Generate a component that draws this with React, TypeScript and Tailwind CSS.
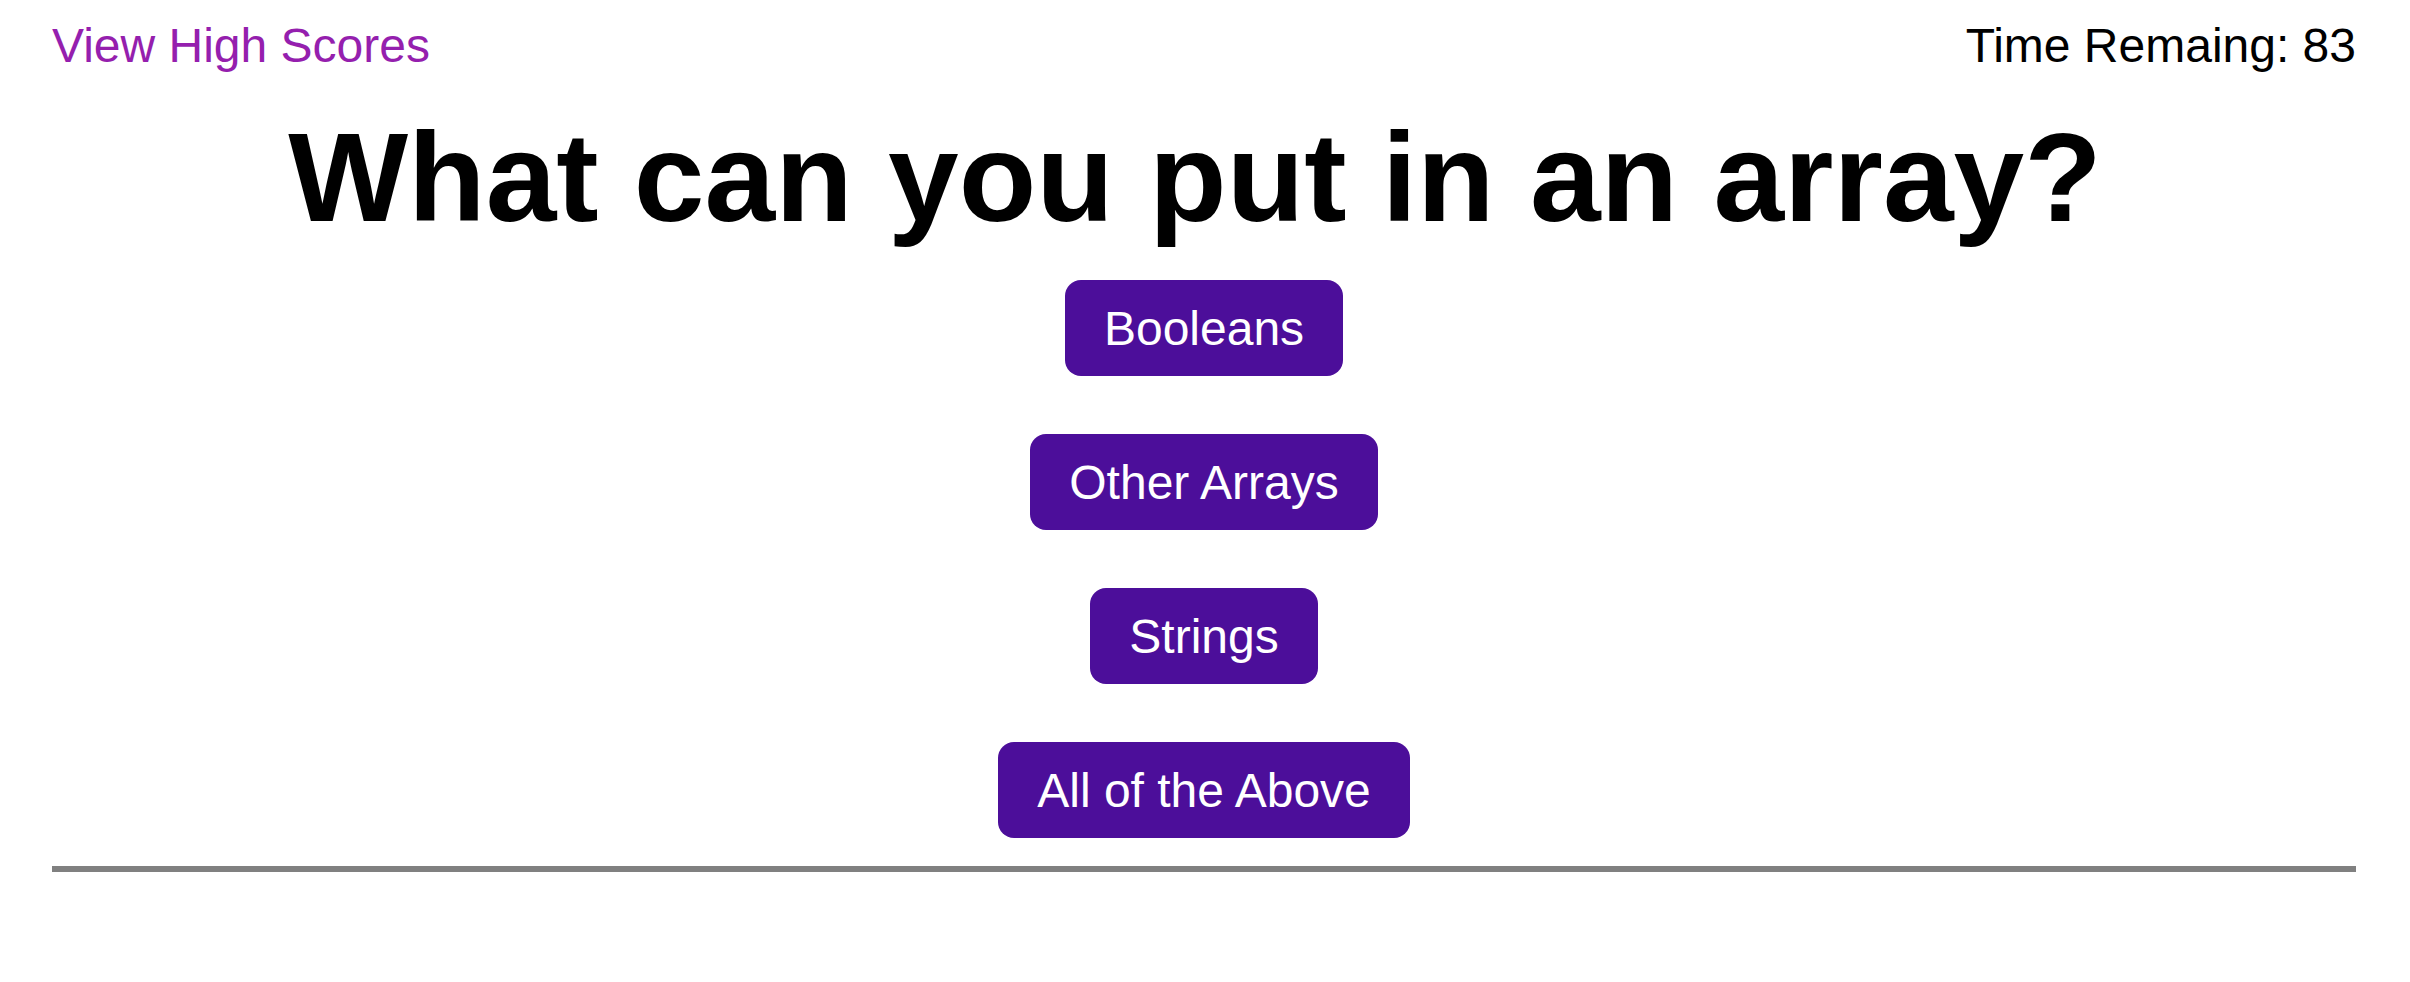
const choices = ["Booleans", "Other Arrays", "Strings", "All of the Above"]

function Header() {
  return (
    <div className="flex justify-between items-start pt-[18px] text-[48px] leading-[55px]">
      <a href="#" className="text-[#951fae]">
        View High Scores
      </a>
      <span className="text-black">Time Remaing: 83</span>
    </div>
  )
}

function Question() {
  return (
    <div className="flex flex-col items-center">
      <h1 className="mt-[31px] pr-[18px] text-[127px] leading-[147px] font-bold text-black text-center">
        What can you put in an array?
      </h1>
      <div className="mt-[29px] flex flex-col items-center gap-[58px]">
        {choices.map((c) => (
          <button
            key={c}
            className="h-[96px] px-[39px] rounded-[16px] bg-[#4c0e9a] text-white text-[48px] leading-[55px]"
          >
            {c}
          </button>
        ))}
      </div>
    </div>
  )
}

export default function App() {
  return (
    <div className="min-h-screen bg-white pl-[52px] pr-[54px] font-['Liberation_Sans',Arial,sans-serif]">
      <Header />
      <Question />
      <div className="mt-[28px] h-[6px] bg-[#808080]" />
    </div>
  )
}
